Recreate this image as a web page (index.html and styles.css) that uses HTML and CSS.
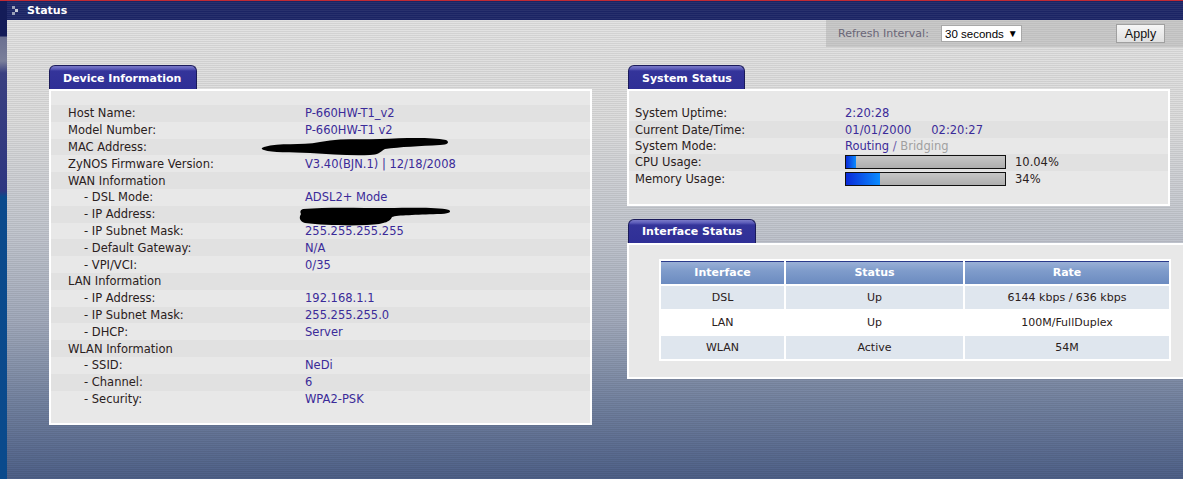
FILE: index.html
```html
<!DOCTYPE html>
<html>
<head>
<meta charset="utf-8">
<title>Status</title>
<link rel="stylesheet" href="styles.css">
</head>
<body>
<div class="frame-left"></div>
<div class="main">
  <div class="titlebar">
    <svg class="title-icon" width="8" height="10" viewBox="0 0 8 10">
      <rect x="0" y="0" width="3" height="3" fill="#9aa0b8"/>
      <rect x="3" y="3" width="3" height="3" fill="#c8ccd8"/>
      <rect x="0" y="6" width="3" height="3" fill="#9aa0b8"/>
    </svg>
    <span class="title-text">Status</span>
  </div>
  <div class="toolbar-row">
    <div class="toolbar">
      <span class="refresh-label">Refresh Interval:</span>
      <span class="select">30 seconds <span class="caret">▼</span></span>
      <span class="apply">Apply</span>
    </div>
  </div>
  <div class="panels">
    <div class="col">
      <div class="tab tab-device">Device Information</div>
      <div class="panel panel-device">
        <div class="row"><span class="lbl">Host Name:</span><span class="val">P-660HW-T1_v2</span></div>
        <div class="row"><span class="lbl">Model Number:</span><span class="val">P-660HW-T1 v2</span></div>
        <div class="row"><span class="lbl">MAC Address:</span><span class="val redact-wrap"><svg class="redact redact-mac" width="192" height="22" viewBox="0 0 192 22"><path d="M4 11 C20 6 40 10 60 6 C80 2 100 4 120 3 C145 2 170 1 186 4 C190 6 188 9 180 9 C160 10 140 11 125 13 C120 16 118 19 110 19 C90 20 70 18 50 17 C30 16 12 17 4 14 C1 13 1 12 4 11 Z" fill="#000"/></svg></span></div>
        <div class="row"><span class="lbl">ZyNOS Firmware Version:</span><span class="val">V3.40(BJN.1) | 12/18/2008</span></div>
        <div class="row"><span class="lbl">WAN Information</span><span class="val"></span></div>
        <div class="row"><span class="lbl sub">- DSL Mode:</span><span class="val">ADSL2+ Mode</span></div>
        <div class="row"><span class="lbl sub">- IP Address:</span><span class="val redact-wrap"><svg class="redact redact-ip" width="156" height="22" viewBox="0 0 156 22"><path d="M6 4 C30 2 60 3 90 3 C115 3 140 2 152 5 C155 7 152 9 140 9 C120 10 100 10 95 12 C93 16 90 19 70 20 C50 21 25 20 8 18 C2 16 2 12 4 9 C3 7 3 5 6 4 Z" fill="#000"/></svg></span></div>
        <div class="row"><span class="lbl sub">- IP Subnet Mask:</span><span class="val">255.255.255.255</span></div>
        <div class="row"><span class="lbl sub">- Default Gateway:</span><span class="val">N/A</span></div>
        <div class="row"><span class="lbl sub">- VPI/VCI:</span><span class="val">0/35</span></div>
        <div class="row"><span class="lbl">LAN Information</span><span class="val"></span></div>
        <div class="row"><span class="lbl sub">- IP Address:</span><span class="val">192.168.1.1</span></div>
        <div class="row"><span class="lbl sub">- IP Subnet Mask:</span><span class="val">255.255.255.0</span></div>
        <div class="row"><span class="lbl sub">- DHCP:</span><span class="val">Server</span></div>
        <div class="row"><span class="lbl">WLAN Information</span><span class="val"></span></div>
        <div class="row"><span class="lbl sub">- SSID:</span><span class="val">NeDi</span></div>
        <div class="row"><span class="lbl sub">- Channel:</span><span class="val">6</span></div>
        <div class="row"><span class="lbl sub">- Security:</span><span class="val">WPA2-PSK</span></div>
      </div>
    </div>
    <div class="col col-right">
      <div class="tab tab-system">System Status</div>
      <div class="panel panel-system">
        <div class="srow"><span class="slbl">System Uptime:</span><span class="val">2:20:28</span></div>
        <div class="srow"><span class="slbl">Current Date/Time:</span><span class="val">01/01/2000<span class="time">02:20:27</span></span></div>
        <div class="srow"><span class="slbl">System Mode:</span><span class="val">Routing <span class="dim-slash">/</span> <span class="dim">Bridging</span></span></div>
        <div class="srow"><span class="slbl">CPU Usage:</span><span class="bar"><span class="fill" style="width:10px"></span></span><span class="pct">10.04%</span></div>
        <div class="srow"><span class="slbl">Memory Usage:</span><span class="bar"><span class="fill" style="width:34px"></span></span><span class="pct">34%</span></div>
      </div>
      <div class="tab tab-iface">Interface Status</div>
      <div class="panel panel-iface">
        <table class="iface">
          <thead>
            <tr><th class="c1">Interface</th><th class="c2">Status</th><th class="c3">Rate</th></tr>
          </thead>
          <tbody>
            <tr class="shade"><td>DSL</td><td>Up</td><td>6144 kbps / 636 kbps</td></tr>
            <tr><td>LAN</td><td>Up</td><td>100M/FullDuplex</td></tr>
            <tr class="shade"><td>WLAN</td><td>Active</td><td>54M</td></tr>
          </tbody>
        </table>
      </div>
    </div>
  </div>
</div>
</body>
</html>
```

FILE: styles.css
```css
html, body {
  margin: 0;
  padding: 0;
}
body {
  width: 1183px;
  height: 479px;
  overflow: hidden;
  display: flex;
  font-family: "DejaVu Sans", Verdana, sans-serif;
  font-size: 11.5px;
  color: #2a2020;
}
.frame-left {
  width: 7px;
  flex: none;
  border-top: 1px solid #c02a34;
  background: linear-gradient(to bottom,
    #141c58 0px, #141c58 35px,
    #6b7090 36px, #7a7f9a 60px,
    #3a4080 72px, #2e3680 190px,
    #0b4a8c 196px, #0a4a8c 479px);
}
.main {
  flex: 1;
  display: flex;
  flex-direction: column;
  min-width: 0;
  background:
    repeating-linear-gradient(to bottom, rgba(0,0,0,0) 0px, rgba(0,0,0,0) 1px, rgba(0,0,0,0.07) 1px, rgba(0,0,0,0.07) 2px),
    linear-gradient(to bottom, #e4e4e4 0px, #dcdcdc 120px, #c2c6ce 230px, #a2aabb 320px, #7483a0 400px, #4e6088 479px);
}
.titlebar {
  height: 19px;
  border-top: 1px solid #c02a34;
  background:
    repeating-linear-gradient(to bottom, rgba(255,255,255,0) 0px, rgba(255,255,255,0) 1px, rgba(255,255,255,0.06) 1px, rgba(255,255,255,0.06) 2px),
    #1b2464;
  display: flex;
  align-items: center;
  padding-left: 5px;
  flex: none;
}
.title-icon {
  margin-right: 7px;
}
.title-text {
  color: #fff;
  font-weight: bold;
  font-size: 11px;
}
.toolbar-row {
  display: flex;
  justify-content: flex-end;
  flex: none;
}
.toolbar {
  width: 345px;
  height: 27px;
  padding-left: 12px;
  display: flex;
  align-items: center;
  background:
    repeating-linear-gradient(to bottom, rgba(0,0,0,0) 0px, rgba(0,0,0,0) 1px, rgba(0,0,0,0.05) 1px, rgba(0,0,0,0.05) 2px),
    #c9c9c9;
}
.refresh-label {
  color: #6a6677;
  font-size: 11px;
  width: 103px;
}
.select {
  width: 76px;
  height: 15px;
  background: #fff;
  border: 1px solid #a8a8a8;
  font-family: "Liberation Sans", Arial, sans-serif;
  font-size: 11.5px;
  color: #000;
  display: flex;
  align-items: center;
  padding-left: 3px;
  box-sizing: content-box;
}
.caret {
  font-size: 10px;
  margin-left: 4px;
}
.apply {
  margin-left: 94px;
  width: 47px;
  height: 17px;
  border: 1px solid #a0a0a0;
  background: linear-gradient(to bottom, #f6f6f6, #e0e0e0);
  font-family: "Liberation Sans", Arial, sans-serif;
  font-size: 12.5px;
  color: #111;
  display: flex;
  align-items: center;
  justify-content: center;
}
.panels {
  display: flex;
  gap: 35px;
  padding-left: 42px;
  margin-top: 18px;
}
.col {
  width: 543px;
  display: flex;
  flex-direction: column;
  flex: none;
}
.col-right {
  width: 600px;
}
.tab {
  height: 24px;
  box-sizing: border-box;
  border: 1px solid #1a1a5a;
  border-bottom: none;
  border-radius: 6px 6px 0 0;
  background: linear-gradient(to bottom, #7a7ac8 0px, #5a5ab8 3px, #34349a 5px, #2f2f96 100%);
  color: #fff;
  font-weight: bold;
  font-size: 11px;
  display: flex;
  align-items: center;
  padding-left: 13px;
  padding-top: 1px;
}
.tab-device { width: 148px; }
.tab-system { width: 117px; margin-left: 1px; }
.tab-iface { width: 128px; margin-left: 1px; margin-top: 13px; }
.panel {
  border: 2px solid #fff;
  background: #e8e8e8;
}
.panel-device {
  padding: 14px 0 0 0;
  height: 336px;
  box-sizing: border-box;
}
.row {
  height: 16.8px;
  display: flex;
  align-items: center;
}
.row:nth-child(odd) {
  background: #e1e1e1;
}
.lbl {
  width: 237px;
  padding-left: 17px;
  color: #2a2020;
  flex: none;
}
.lbl.sub {
  padding-left: 33px;
  width: 221px;
}
.val {
  color: #3b2b99;
  white-space: nowrap;
}
.redact-wrap {
  position: relative;
  height: 17px;
}
.redact {
  position: absolute;
}
.redact-mac {
  left: -45px;
  top: -3px;
}
.redact-ip {
  left: -8px;
  top: -1px;
}
.panel-system {
  width: 543px;
  box-sizing: border-box;
  padding: 14px 0 17px 0;
}
.srow {
  height: 16.4px;
  display: flex;
  align-items: center;
}
.srow:nth-child(even) {
  background: #e1e1e1;
}
.slbl {
  width: 210px;
  padding-left: 6px;
  flex: none;
  color: #2a2020;
}
.time {
  margin-left: 20px;
}
.dim-slash {
  color: #6a5aa9;
}
.dim {
  color: #a0a0a0;
}
.bar {
  width: 159px;
  height: 12px;
  border: 1px solid #111;
  background: linear-gradient(to bottom, #c6c6c6, #aeaeae);
  display: flex;
  flex: none;
}
.fill {
  height: 100%;
  background: linear-gradient(to right, #0a2ad8, #0a8cff);
}
.pct {
  margin-left: 9px;
  color: #2a2020;
}
.panel-iface {
  padding: 14px 0 16px 30px;
}
.iface {
  border-collapse: separate;
  border-spacing: 2px;
  background: #fff;
  font-size: 11px;
}
.iface th {
  height: 22px;
  padding: 0;
  color: #fff;
  font-weight: bold;
  border-top: 1px solid #2a3a8a;
  background: linear-gradient(to bottom, #9ab0d6 0%, #7f9ccb 40%, #6b8bc0 100%);
}
.iface td {
  height: 23px;
  padding: 0;
  text-align: center;
  color: #2a2020;
}
.iface tr.shade td {
  background: #dfe6ee;
}
.c1 { width: 123px; }
.c2 { width: 177px; }
.c3 { width: 204px; }
```
